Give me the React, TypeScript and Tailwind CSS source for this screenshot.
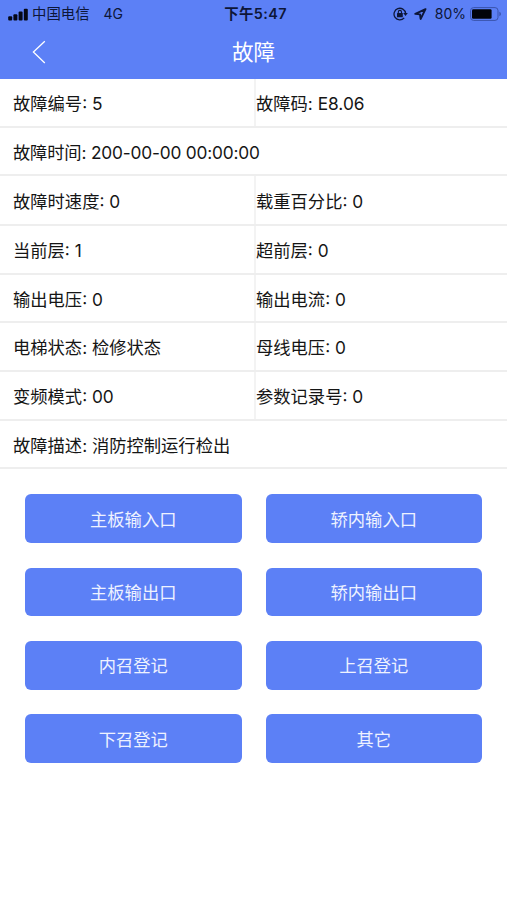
import clsx from 'clsx';

const rows = [
  { height: 'h-[49px]', cells: ['故障编号: 5', '故障码: E8.06'] },
  {
    height: 'h-12',
    cells: ['故障时间: 200-00-00 00:00:00'],
    tracking: 'tracking-[-0.18px]'
  },
  { height: 'h-[50px]', cells: ['故障时速度: 0', '载重百分比: 0'] },
  { height: 'h-[49px]', cells: ['当前层: 1', '超前层: 0'] },
  { height: 'h-12', cells: ['输出电压: 0', '输出电流: 0'] },
  { height: 'h-[49px]', cells: ['电梯状态: 检修状态', '母线电压: 0'] },
  { height: 'h-[49px]', cells: ['变频模式: 00', '参数记录号: 0'] },
  { height: 'h-12', cells: ['故障描述: 消防控制运行检出'] }
];

const actions = [
  '主板输入口',
  '轿内输入口',
  '主板输出口',
  '轿内输出口',
  '内召登记',
  '上召登记',
  '下召登记',
  '其它'
];

const SignalIcon = () => (
  <svg width="20" height="13" viewBox="0 0 20 13" fill="#050817">
    <rect x="0.2" y="8.2" width="4" height="4.2" rx="1" />
    <rect x="5.4" y="6.3" width="4" height="6.1" rx="1" />
    <rect x="10.6" y="3.6" width="4" height="8.8" rx="1" />
    <rect x="15.8" y="0.8" width="4" height="11.6" rx="1" />
  </svg>
);

const RotationLockIcon = () => (
  <svg width="15" height="14" viewBox="0 0 15 14" fill="none">
    <path
      d="M11.2 10.9A5.8 5.8 0 1 1 12.6 6.4"
      stroke="#0d1638"
      strokeWidth="1.3"
    />
    <path d="M10.2 6H14.8L12.5 9.1Z" fill="#0d1638" />
    <rect x="4" y="6" width="5.8" height="4.2" rx="0.5" fill="#0d1638" />
    <path
      d="M5.3 6.4V5a1.6 1.6 0 0 1 3.2 0v1.4"
      stroke="#0d1638"
      strokeWidth="1.1"
    />
  </svg>
);

const LocationIcon = () => (
  <svg width="13" height="12" viewBox="0 0 13 12" fill="none">
    <path
      d="M11.5 1.1L1.3 5.9L6 6.4L6.6 11Z"
      stroke="#0d1638"
      strokeWidth="1.9"
      strokeLinejoin="round"
    />
  </svg>
);

const BatteryIcon = () => (
  <svg width="32" height="14" viewBox="0 0 32 14" fill="none">
    <rect
      x="0.6"
      y="0.6"
      width="27.4"
      height="12.8"
      rx="3"
      stroke="#3a53ac"
      strokeWidth="1"
    />
    <rect x="2" y="2.2" width="19.6" height="9.6" rx="1.3" fill="#020409" />
    <path d="M29.4 4.8c2 .7 2 3.7 0 4.4Z" fill="#3a53ac" />
  </svg>
);

const StatusBar = () => (
  <div className="grid grid-cols-[1fr_auto_1fr] items-center h-7 pl-2 pr-[5px] text-[14.4px] leading-none text-[#0d1638]">
    <div className="flex items-center">
      <SignalIcon />
      <span className="ml-1">中国电信</span>
      <span className="ml-[14px] text-[14px]">4G</span>
    </div>
    <div className="pl-px font-semibold text-[14.4px] tracking-[0.4px]">
      下午5:47
    </div>
    <div className="flex items-center justify-end">
      <RotationLockIcon />
      <span className="ml-1.5">
        <LocationIcon />
      </span>
      <span className="ml-2 text-[14px]">80%</span>
      <span className="ml-1">
        <BatteryIcon />
      </span>
    </div>
  </div>
);

const App = () => {
  return (
    <div className="w-full min-h-screen bg-white font-['Inter','Noto_Sans_CJK_SC',sans-serif] text-[17.3px]">
      <header className="h-[79px] bg-[#5c80f6]">
        <StatusBar />
        <div className="grid grid-cols-[1fr_auto_1fr] items-center h-12 px-8">
          <svg width="14" height="24" viewBox="0 0 14 24" fill="none">
            <path d="M12.8 1.2L1.4 12L12.8 23" stroke="white" strokeWidth="1.3" />
          </svg>
          <h1 className="pt-0.5 text-[21.6px] leading-none text-white">故障</h1>
        </div>
      </header>
      <section className="text-[#151515]">
        {rows.map((row) => (
          <div
            key={row.cells[0]}
            className={clsx(
              'flex border-b-2 border-[#eeeeee]',
              row.height,
              row.tracking
            )}
          >
            {row.cells.map((cell, index) => (
              <div
                key={cell}
                className={clsx(
                  'flex items-center pt-[3px] whitespace-nowrap',
                  index === 0 && 'pl-[13px]',
                  index === 0 &&
                    row.cells.length > 1 &&
                    'w-64 border-r-2 border-[#f3f3f3]'
                )}
              >
                {cell}
              </div>
            ))}
          </div>
        ))}
      </section>
      <section className="grid grid-cols-2 gap-x-6 gap-y-[24.4px] px-[25px] pt-[25.3px]">
        {actions.map((action) => (
          <button
            key={action}
            className="h-[48.9px] pt-0.5 rounded-md bg-[#5c80f6] text-[#eef2ff]"
          >
            {action}
          </button>
        ))}
      </section>
    </div>
  );
};

export default App;
